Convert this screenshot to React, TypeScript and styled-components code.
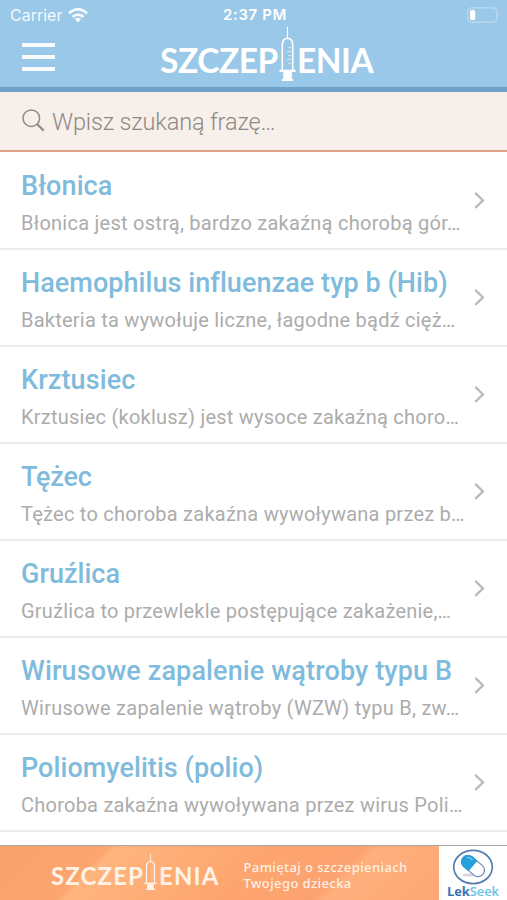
import React from 'react';
import styled, { createGlobalStyle } from 'styled-components';

const GlobalStyle = createGlobalStyle`
  * { box-sizing: border-box; }
  body { margin: 0; background: #fff; overflow: hidden; }
`;

const Screen = styled.div`
  display: flex;
  flex-direction: column;
  width: 507px;
  height: 900px;
  background: #fff;
  font-family: Roboto, sans-serif;
  overflow: hidden;
`;

const Header = styled.header`
  flex: none;
  height: 92px;
  background: #9ac8e9;
  border-bottom: 5px solid #70a2c9;
  color: #fff;
`;

const StatusBar = styled.div`
  display: grid;
  grid-template-columns: 1fr auto 1fr;
  align-items: center;
  height: 28px;
  padding: 2px 7px 0 10px;
  font-family: Inter, sans-serif;
  font-size: 16px;
  line-height: 20px;
`;

const Carrier = styled.div`
  display: flex;
  align-items: center;
  gap: 6px;
  opacity: 0.9;
`;

const Clock = styled.div`
  font-size: 15px;
  font-weight: 600;
  letter-spacing: 0.6px;
`;

const BatterySlot = styled.div`
  display: flex;
  justify-content: flex-end;
`;

const NavBar = styled.div`
  display: grid;
  grid-template-columns: 138px 1fr;
  height: 59px;
  padding-left: 22px;
`;

const MenuButton = styled.button`
  display: flex;
  flex-direction: column;
  gap: 8px;
  width: 33px;
  margin: 15px 0 0;
  padding: 0;
  border: 0;
  background: none;
`;

const MenuLine = styled.span`
  width: 33px;
  height: 4px;
  background: rgba(255, 255, 255, 0.94);
`;

const Wordmark = styled.div<{ $small?: boolean }>`
  flex: none;
  display: flex;
  align-items: flex-start;
  height: ${(p) => (p.$small ? 40 : 58)}px;
  color: ${(p) => (p.$small ? '#fff3e8' : '#fff')};
  font-family: Lato, sans-serif;
  font-weight: 700;
  font-size: ${(p) => (p.$small ? 24 : 33.5)}px;
  line-height: ${(p) => (p.$small ? 30 : 40)}px;
  letter-spacing: ${(p) => (p.$small ? 1.1 : -0.45)}px;

  svg {
    flex: none;
    margin: ${(p) => (p.$small ? '8px 2px 0 0' : '-1px 1px 0 1px')};
  }
`;

const WordPart = styled.span<{ $top: number }>`
  padding-top: ${(p) => p.$top}px;
`;

const SearchBar = styled.div`
  flex: none;
  display: flex;
  align-items: center;
  gap: 7px;
  height: 60px;
  padding: 0 22px 1px;
  background: #f7f0ea;
  border-bottom: 2px solid #dfa288;
  font-size: 23.5px;
  font-weight: 300;
`;

const Placeholder = styled.span`
  padding-top: 2px;
  color: #8d8985;
  letter-spacing: -0.15px;
`;

const List = styled.ul`
  flex: 1;
  margin: 0;
  padding: 1px 0 0;
  list-style: none;
`;

const Row = styled.li`
  display: flex;
  align-items: center;
  height: 97px;
  padding: 0 22px 0 21px;
  border-bottom: 2px solid #ececec;
`;

const RowText = styled.div`
  flex: 1;
  min-width: 0;
  padding-top: 6px;
  white-space: nowrap;
`;

const Title = styled.div<{ $spacing: number }>`
  color: #7fbbdc;
  font-size: 27px;
  font-weight: 500;
  line-height: 38px;
  letter-spacing: ${(p) => p.$spacing}px;
`;

const Summary = styled.div<{ $spacing: number }>`
  color: #acacac;
  font-size: 20px;
  line-height: 36px;
  letter-spacing: ${(p) => p.$spacing}px;
`;

const Banner = styled.footer`
  flex: none;
  display: flex;
  height: 55px;
  border-top: 1px solid #a9a5a2;
`;

const Promo = styled.div`
  display: flex;
  width: 439px;
  padding-left: 51px;
  background: linear-gradient(135deg, #fba26b 0%, #fda56e 22%, #ffb47d 24%, #fea56f 55%, #fba270 74%, #feaf7c 77%, #fca776 100%);
`;

const Slogan = styled.div`
  display: flex;
  flex-direction: column;
  margin: 13px 0 0 24px;
  color: #fff0e3;
  font-family: "Noto Sans", sans-serif;
  font-size: 13px;
  font-weight: 500;
  line-height: 16px;
  letter-spacing: 0.4px;
  white-space: nowrap;
`;

const Sponsor = styled.div`
  flex: 1;
  display: flex;
  flex-direction: column;
  align-items: center;
  padding-top: 3px;
  background: #fff;
`;

const SponsorName = styled.div`
  margin-top: -1px;
  color: #3a75b4;
  font-family: "Open Sans", sans-serif;
  font-size: 13px;
  font-weight: 700;
  line-height: 14px;
  letter-spacing: -0.1px;
`;

const SponsorAccent = styled.span`
  color: #69c3e4;
  font-weight: 600;
`;

const WifiIcon = () => (
  <svg width="20" height="15" viewBox="0 0 20 15" fill="none" stroke="#fff" strokeWidth="2.7">
    <path d="M1.1 5.4C6-.1 14-.1 18.9 5.4" />
    <path d="M4.5 9C7.6 5.7 12.4 5.7 15.5 9" />
    <path d="M10 14.5 6.8 11.2Q10 8.5 13.2 11.2Z" fill="#fff" stroke="none" />
  </svg>
);

const BatteryIcon = () => (
  <svg width="33" height="16" viewBox="0 0 33 16">
    <rect x="0.8" y="0.8" width="29" height="14.4" rx="4" fill="none" stroke="#bcdcf2" strokeWidth="1.2" />
    <rect x="3" y="3" width="5.2" height="10" rx="1.6" fill="#fff" />
    <path d="M31.2 5.5q2 2.5 0 5z" fill="#bcdcf2" />
  </svg>
);

const Syringe = ({ width, height }: { width: number; height: number }) => (
  <svg width={width} height={height} viewBox="0 0 17 55" preserveAspectRatio="none">
    <path d="M8.5 0V12" stroke="currentColor" strokeWidth="1.2" />
    <path d="M3.3 44V18Q3.3 13.2 7 11.8H10Q13.7 13.2 13.7 18V44" fill="none" stroke="currentColor" strokeWidth="1.6" />
    <path d="M9.5 21H12M8 25H12M9.5 29H12M8 33H12M9.5 37H12" stroke="currentColor" strokeWidth="0.9" opacity="0.75" />
    <path d="M0.5 43.5H16.5V45.8H12.8V53H14.2V55H2.8V53H4.2V45.8H0.5Z" fill="currentColor" />
  </svg>
);

const SearchIcon = () => (
  <svg width="23" height="23" viewBox="0 0 23 23" fill="none" stroke="#8f8b88">
    <circle cx="9.3" cy="9.2" r="8.3" strokeWidth="1.5" />
    <path d="M15.2 15.2 21.7 21.6" strokeWidth="2.2" />
  </svg>
);

const Chevron = () => (
  <svg width="11" height="18" viewBox="0 0 11 18" fill="none" stroke="#b9b9b9" strokeWidth="2.2">
    <path d="M1.3 0.9 9 8.4 1.3 15.9" />
  </svg>
);

const PillLogo = () => (
  <svg width="42" height="36" viewBox="0 0 42 36">
    <ellipse cx="21" cy="18" rx="19.3" ry="16.6" fill="#fff" stroke="#567eaf" strokeWidth="1.7" />
    <ellipse cx="16.5" cy="26" rx="6" ry="1.6" fill="#d9d4df" />
    <g transform="rotate(40 21 17)">
      <rect x="8" y="10.6" width="26" height="12.8" rx="6.4" fill="#fff" stroke="#6689b5" strokeWidth="1.2" />
      <path d="M21 10V24H14.7A7 7 0 0 1 14.7 10Z" fill="#269fda" />
      <path d="M11 14.5Q13 12 17 12.8" fill="none" stroke="#69c6ed" strokeWidth="1.6" />
    </g>
  </svg>
);

const diseases = [
  { title: 'Błonica', summary: 'Błonica jest ostrą, bardzo zakaźną chorobą gór…', ts: 0.1, ss: 0.26 },
  { title: 'Haemophilus influenzae typ b (Hib)', summary: 'Bakteria ta wywołuje liczne, łagodne bądź cięż…', ts: 0.06, ss: 0.24 },
  { title: 'Krztusiec', summary: 'Krztusiec (koklusz) jest wysoce zakaźną choro…', ts: 0.1, ss: 0.24 },
  { title: 'Tężec', summary: 'Tężec to choroba zakaźna wywoływana przez b…', ts: -0.2, ss: 0.24 },
  { title: 'Gruźlica', summary: 'Gruźlica to przewlekle postępujące zakażenie,…', ts: 0, ss: 0.23 },
  { title: 'Wirusowe zapalenie wątroby typu B', summary: 'Wirusowe zapalenie wątroby (WZW) typu B, zw…', ts: 0.12, ss: 0.26 },
  { title: 'Poliomyelitis (polio)', summary: 'Choroba zakaźna wywoływana przez wirus Poli…', ts: 0.06, ss: 0.24 },
];

export default function App() {
  return (
    <>
      <GlobalStyle />
      <Screen>
        <Header>
          <StatusBar>
            <Carrier>Carrier <WifiIcon /></Carrier>
            <Clock>2:37 PM</Clock>
            <BatterySlot><BatteryIcon /></BatterySlot>
          </StatusBar>
          <NavBar>
            <MenuButton aria-label="Menu"><MenuLine /><MenuLine /><MenuLine /></MenuButton>
            <Wordmark>
              <WordPart $top={12}>SZCZEP</WordPart>
              <Syringe width={17} height={54} />
              <WordPart $top={12}>ENIA</WordPart>
            </Wordmark>
          </NavBar>
        </Header>
        <SearchBar>
          <SearchIcon />
          <Placeholder>Wpisz szukaną frazę…</Placeholder>
        </SearchBar>
        <List>
          {diseases.map((d) => (
            <Row key={d.title}>
              <RowText>
                <Title $spacing={d.ts}>{d.title}</Title>
                <Summary $spacing={d.ss}>{d.summary}</Summary>
              </RowText>
              <Chevron />
            </Row>
          ))}
        </List>
        <Banner>
          <Promo>
            <Wordmark $small>
              <WordPart $top={15}>SZCZEP</WordPart>
              <Syringe width={13} height={36} />
              <WordPart $top={15}>ENIA</WordPart>
            </Wordmark>
            <Slogan>
              <span>Pamiętaj o szczepieniach</span>
              <span>Twojego dziecka</span>
            </Slogan>
          </Promo>
          <Sponsor>
            <PillLogo />
            <SponsorName>Lek<SponsorAccent>Seek</SponsorAccent></SponsorName>
          </Sponsor>
        </Banner>
      </Screen>
    </>
  );
}
